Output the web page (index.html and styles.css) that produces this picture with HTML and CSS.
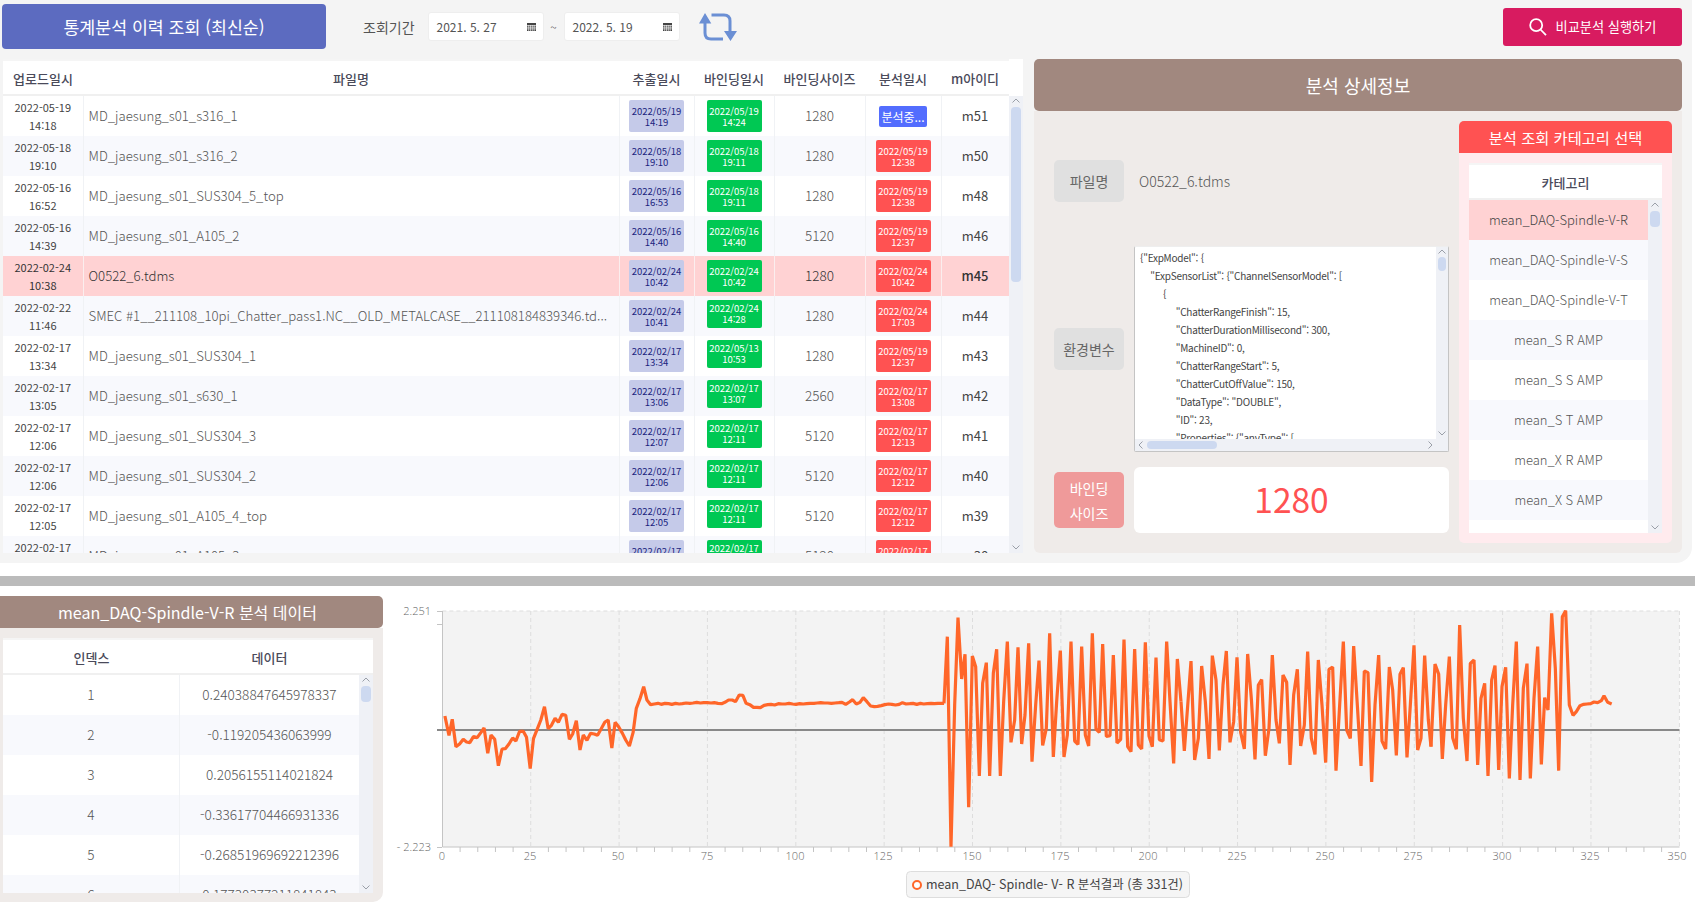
FILE: index.html
```html
<!DOCTYPE html>
<html lang="ko">
<head>
    <title>통계분석 이력 조회</title>
    <meta charset="UTF-8">
    <link rel="stylesheet" href="styles.css">
</head>
<body>
    <svg class="defs" width="0" height="0">
        <symbol id="cal" viewBox="0 0 9 8">
            <path d="M0 0h9v8H0z" fill="#444"/>
            <path d="M0 2.5h9M0 4.2h9M0 5.9h9M1.7 2v6M3.5 2v6M5.3 2v6M7.2 2v6" stroke="#fff" stroke-width=".6"/>
        </symbol>
        <symbol id="up" viewBox="0 0 8 5"><path d="M.5 4.5 4 1l3.5 3.5" fill="none" stroke="#9a9fa8"/></symbol>
        <symbol id="down" viewBox="0 0 8 5"><path d="M.5.5 4 4 7.500.5" fill="none" stroke="#9a9fa8"/></symbol>
        <symbol id="left" viewBox="0 0 5 8"><path d="M4.500.5 1 4l3.500 3.500" fill="none" stroke="#9a9fa8"/></symbol>
        <symbol id="right" viewBox="0 0 5 8"><path d="M.5.5 4 4 .5 7.500" fill="none" stroke="#9a9fa8"/></symbol>
    </svg>

    <div class="top">
        <div class="toolbar">
            <div class="btn-history">통계분석 이력 조회 (최신순)</div>
            <span class="period-label">조회기간</span>
            <div class="date-box">2021. 5. 27<svg class="cal"><use href="#cal"/></svg></div>
            <span class="tilde">~</span>
            <div class="date-box">2022. 5. 19<svg class="cal"><use href="#cal"/></svg></div>
            <svg class="refresh" viewBox="0 0 38 28">
                <path d="M6 10v10q0 6 6 6h12M12.500 2H25q6 0 6 6v11" fill="none" stroke="#6b8fd4" stroke-width="3"/>
                <path d="M6 0l6.300 10.500H0zM31.500 28L25 18h13z" fill="#6b8fd4"/>
            </svg>
            <div class="btn-compare">
                <svg class="search" viewBox="0 0 18 18">
                    <circle cx="7.200" cy="7.200" r="6" fill="none" stroke="#fff" stroke-width="1.800"/>
                    <path d="M11.500 11.500l5.500 5.700" stroke="#fff" stroke-width="1.800"/>
                </svg>
                비교분석 실행하기
            </div>
        </div>

        <div class="main">
            <div class="history">
                <table class="tbl head">
                    <colgroup><col class="c1"><col class="c2"><col class="c3"><col class="c4"><col class="c5"><col class="c6"><col class="c7"></colgroup>
                    <tr><th>업로드일시</th><th>파일명</th><th>추출일시</th><th>바인딩일시</th><th>바인딩사이즈</th><th>분석일시</th><th>m아이디</th></tr>
                </table>
                <div class="history-body">
                    <div class="history-rows">
                        <table class="tbl">
                            <colgroup><col class="c1"><col class="c2"><col class="c3"><col class="c4"><col class="c5"><col class="c6"><col class="c7"></colgroup>
                            <tr>
                                <td class="up">2022-05-19<br>14:18</td><td class="name">MD_jaesung_s01_s316_1</td>
                                <td><div class="badge ext">2022/05/19<br>14:19</div></td><td><div class="badge bind">2022/05/19<br>14:24</div></td>
                                <td class="size">1280</td><td><div class="badge busy">분석중...</div></td><td class="mid">m51</td>
                            </tr>
                            <tr class="alt">
                                <td class="up">2022-05-18<br>19:10</td><td class="name">MD_jaesung_s01_s316_2</td>
                                <td><div class="badge ext">2022/05/18<br>19:10</div></td><td><div class="badge bind">2022/05/18<br>19:11</div></td>
                                <td class="size">1280</td><td><div class="badge done">2022/05/19<br>12:38</div></td><td class="mid">m50</td>
                            </tr>
                            <tr>
                                <td class="up">2022-05-16<br>16:52</td><td class="name">MD_jaesung_s01_SUS304_5_top</td>
                                <td><div class="badge ext">2022/05/16<br>16:53</div></td><td><div class="badge bind">2022/05/18<br>19:11</div></td>
                                <td class="size">1280</td><td><div class="badge done">2022/05/19<br>12:38</div></td><td class="mid">m48</td>
                            </tr>
                            <tr class="alt">
                                <td class="up">2022-05-16<br>14:39</td><td class="name">MD_jaesung_s01_A105_2</td>
                                <td><div class="badge ext">2022/05/16<br>14:40</div></td><td><div class="badge bind">2022/05/16<br>14:40</div></td>
                                <td class="size">5120</td><td><div class="badge done">2022/05/19<br>12:37</div></td><td class="mid">m46</td>
                            </tr>
                            <tr class="sel">
                                <td class="up">2022-02-24<br>10:38</td><td class="name">O0522_6.tdms</td>
                                <td><div class="badge ext">2022/02/24<br>10:42</div></td><td><div class="badge bind">2022/02/24<br>10:42</div></td>
                                <td class="size">1280</td><td><div class="badge done">2022/02/24<br>10:42</div></td><td class="mid">m45</td>
                            </tr>
                            <tr class="alt">
                                <td class="up">2022-02-22<br>11:46</td><td class="name">SMEC #1__211108_10pi_Chatter_pass1.NC__OLD_METALCASE__211108184839346.td...</td>
                                <td><div class="badge ext">2022/02/24<br>10:41</div></td><td><div class="badge bind short">2022/02/24<br>14:28</div></td>
                                <td class="size">1280</td><td><div class="badge done">2022/02/24<br>17:03</div></td><td class="mid">m44</td>
                            </tr>
                            <tr>
                                <td class="up">2022-02-17<br>13:34</td><td class="name">MD_jaesung_s01_SUS304_1</td>
                                <td><div class="badge ext">2022/02/17<br>13:34</div></td><td><div class="badge bind short">2022/05/13<br>10:53</div></td>
                                <td class="size">1280</td><td><div class="badge done">2022/05/19<br>12:37</div></td><td class="mid">m43</td>
                            </tr>
                            <tr class="alt">
                                <td class="up">2022-02-17<br>13:05</td><td class="name">MD_jaesung_s01_s630_1</td>
                                <td><div class="badge ext">2022/02/17<br>13:06</div></td><td><div class="badge bind short">2022/02/17<br>13:07</div></td>
                                <td class="size">2560</td><td><div class="badge done">2022/02/17<br>13:08</div></td><td class="mid">m42</td>
                            </tr>
                            <tr>
                                <td class="up">2022-02-17<br>12:06</td><td class="name">MD_jaesung_s01_SUS304_3</td>
                                <td><div class="badge ext">2022/02/17<br>12:07</div></td><td><div class="badge bind short">2022/02/17<br>12:11</div></td>
                                <td class="size">5120</td><td><div class="badge done">2022/02/17<br>12:13</div></td><td class="mid">m41</td>
                            </tr>
                            <tr class="alt">
                                <td class="up">2022-02-17<br>12:06</td><td class="name">MD_jaesung_s01_SUS304_2</td>
                                <td><div class="badge ext">2022/02/17<br>12:06</div></td><td><div class="badge bind short">2022/02/17<br>12:11</div></td>
                                <td class="size">5120</td><td><div class="badge done">2022/02/17<br>12:12</div></td><td class="mid">m40</td>
                            </tr>
                            <tr>
                                <td class="up">2022-02-17<br>12:05</td><td class="name">MD_jaesung_s01_A105_4_top</td>
                                <td><div class="badge ext">2022/02/17<br>12:05</div></td><td><div class="badge bind short">2022/02/17<br>12:11</div></td>
                                <td class="size">5120</td><td><div class="badge done">2022/02/17<br>12:12</div></td><td class="mid">m39</td>
                            </tr>
                            <tr class="alt">
                                <td class="up">2022-02-17<br>12:04</td><td class="name">MD_jaesung_s01_A105_3</td>
                                <td><div class="badge ext">2022/02/17<br>12:04</div></td><td><div class="badge bind short">2022/02/17<br>12:11</div></td>
                                <td class="size">5120</td><td><div class="badge done">2022/02/17<br>12:12</div></td><td class="mid">m38</td>
                            </tr>
                        </table>
                    </div>
                    <div class="scroll bar-history">
                        <svg class="arrow"><use href="#up"/></svg>
                        <div class="thumb"></div>
                        <svg class="arrow end"><use href="#down"/></svg>
                    </div>
                </div>
            </div>

            <div class="detail">
                <div class="detail-title">분석 상세정보</div>
                <div class="detail-body">
                    <div class="detail-left">
                        <div class="row row-name">
                            <div class="tag">파일명</div>
                            <div class="file-value">O0522_6.tdms</div>
                        </div>
                        <div class="row row-env">
                            <div class="tag">환경변수</div>
                            <div class="json-box">
                                <div class="json-top">
<pre class="json">{"ExpModel": {
    "ExpSensorList": {"ChannelSensorModel": [
         {
              "ChatterRangeFinish": 15,
              "ChatterDurationMillisecond": 300,
              "MachineID": 0,
              "ChatterRangeStart": 5,
              "ChatterCutOffValue": 150,
              "DataType": "DOUBLE",
              "ID": 23,
              "Properties": {"anyType": [</pre>
                                    <div class="scroll bar-json">
                                        <svg class="arrow"><use href="#up"/></svg>
                                        <div class="thumb"></div>
                                        <svg class="arrow end"><use href="#down"/></svg>
                                    </div>
                                </div>
                                <div class="hbar">
                                    <svg class="harrow"><use href="#left"/></svg>
                                    <div class="hthumb"></div>
                                    <svg class="harrow end"><use href="#right"/></svg>
                                </div>
                            </div>
                        </div>
                        <div class="row row-size">
                            <div class="tag tag-pink">바인딩<br>사이즈</div>
                            <div class="size-value">1280</div>
                        </div>
                    </div>

                    <div class="detail-right">
                        <div class="cat-title">분석 조회 카테고리 선택</div>
                        <div class="cat-panel">
                            <div class="cat-card">
                                <div class="list-head">카테고리</div>
                                <div class="cat-body">
                                    <div class="cat-list">
                                        <div class="cat sel">mean_DAQ-Spindle-V-R</div>
                                        <div class="cat alt">mean_DAQ-Spindle-V-S</div>
                                        <div class="cat">mean_DAQ-Spindle-V-T</div>
                                        <div class="cat alt">mean_S R AMP</div>
                                        <div class="cat">mean_S S AMP</div>
                                        <div class="cat alt">mean_S T AMP</div>
                                        <div class="cat">mean_X R AMP</div>
                                        <div class="cat alt">mean_X S AMP</div>
                                    </div>
                                    <div class="scroll bar-cat">
                                        <svg class="arrow"><use href="#up"/></svg>
                                        <div class="thumb"></div>
                                        <svg class="arrow end"><use href="#down"/></svg>
                                    </div>
                                </div>
                            </div>
                        </div>
                    </div>
                </div>
            </div>
        </div>
    </div>

    <div class="divider"></div>

    <div class="bottom">
        <div class="data-panel">
            <div class="data-title">mean_DAQ-Spindle-V-R 분석 데이터</div>
            <div class="data-body">
                <div class="data-card">
                    <div class="data-head"><span>인덱스</span><span>데이터</span></div>
                    <div class="data-main">
                        <div class="data-rows">
                            <div class="drow"><span>1</span><span>0.24038847645978337</span></div>
                            <div class="drow alt"><span>2</span><span>-0.119205436063999</span></div>
                            <div class="drow"><span>3</span><span>0.2056155114021824</span></div>
                            <div class="drow alt"><span>4</span><span>-0.33617704466931336</span></div>
                            <div class="drow"><span>5</span><span>-0.26851969692212396</span></div>
                            <div class="drow alt"><span>6</span><span>0.17730377211841843</span></div>
                        </div>
                        <div class="scroll bar-data">
                            <svg class="arrow"><use href="#up"/></svg>
                            <div class="thumb"></div>
                            <svg class="arrow end"><use href="#down"/></svg>
                        </div>
                    </div>
                </div>
            </div>
        </div>

        <svg class="chart" viewBox="383 596 1312 306">
            <rect x="442.400" y="611" width="1237" height="236" fill="#f3f3f3"/>
            <path class="grid" d="M530.750 611V847M619.100 611V847M707.450 611V847M795.800 611V847M884.150 611V847M972.500 611V847M1060.850 611V847M1149.200 611V847M1237.550 611V847M1325.900 611V847M1414.250 611V847M1502.600 611V847M1590.950 611V847M1679.400 611V847M442.400 611H1679.400"/>
            <path class="axis" d="M442.500 611V847H1679.500M437 611.500h5M437 624.500h5M437 847.500h5"/>
            <path class="axis" d="M460.100 847v5m17.670-5v5m17.670-5v5m17.670-5v5M548.400 847v5m17.670-5v5m17.670-5v5m17.670-5v5M636.800 847v5m17.670-5v5m17.670-5v5m17.670-5v5M725.100 847v5m17.670-5v5m17.670-5v5m17.670-5v5M813.500 847v5m17.670-5v5m17.670-5v5m17.670-5v5M901.800 847v5m17.670-5v5m17.670-5v5m17.670-5v5M990.200 847v5m17.670-5v5m17.670-5v5m17.670-5v5M1078.500 847v5m17.670-5v5m17.670-5v5m17.670-5v5M1166.900 847v5m17.670-5v5m17.670-5v5m17.670-5v5M1255.200 847v5m17.670-5v5m17.670-5v5m17.670-5v5M1343.600 847v5m17.670-5v5m17.670-5v5m17.670-5v5M1431.900 847v5m17.670-5v5m17.670-5v5m17.670-5v5M1520.300 847v5m17.670-5v5m17.670-5v5m17.670-5v5M1608.600 847v5m17.670-5v5m17.670-5v5m17.670-5v5"/>
            <path class="zero" d="M437 730H1679.500"/>

            <text class="ylabel" x="431" y="615">2.251</text>
            <text class="ylabel" x="431" y="851">- 2.223</text>
            <g class="xlabels">
                <text x="442" y="860">0</text><text x="530" y="860">25</text><text x="618" y="860">50</text>
                <text x="707" y="860">75</text><text x="795" y="860">100</text><text x="883" y="860">125</text>
                <text x="972" y="860">150</text><text x="1060" y="860">175</text><text x="1148" y="860">200</text>
                <text x="1237" y="860">225</text><text x="1325" y="860">250</text><text x="1413" y="860">275</text>
                <text x="1502" y="860">300</text><text x="1590" y="860">325</text><text x="1677" y="860">350</text>
            </g>

            <!-- series read off the plot: first stretch, then the three spiky stretches -->
            <polyline class="line" transform="translate(380 590) scale(.40816 .33333)" points="159,378 169,436 177,388 186,470 195,462 204,448 212,456 220,458 229,440 238,443 247,428 255,414 264,490 272,435 281,448 290,527 299,477 307,476 316,462 325,444 333,453 342,424 351,424 359,442 368,536 376,446 385,418 394,390 403,350 412,416 420,406 429,385 437,397 446,373 455,376 464,448 472,432 481,392 490,480 498,435 507,451 516,430 525,432 533,436 542,416 551,396 559,390 568,474 576,397 585,411 594,430 602,450 611,468 620,428 628,355 637,326 646,290 654,330 663,344 672,342 681,340 689,343 698,340 707,341 715,343 724,340 733,342 741,341 750,339 759,340 767,339 776,337 785,339 793,338 802,338 811,339 819,338 828,340 837,341 845,337 854,330 863,330 871,335 880,315 889,316 897,340 906,344 915,352 924,352 932,353 941,346 950,344 958,343 967,345 976,341 985,342 993,342 1002,340 1011,342 1019,343 1028,341 1037,342 1045,341 1054,340 1063,340 1071,339 1080,338 1089,339 1097,339 1106,340 1115,339 1124,338 1132,337 1141,343 1150,336 1158,329 1167,342 1176,337 1184,323 1193,335 1202,348 1211,350 1219,349 1228,347 1237,344 1246,342 1254,343 1263,345 1272,343 1280,338 1289,342 1298,341 1306,340 1315,343 1324,340 1332,342 1341,341 1350,340 1358,341 1367,340 1376,340 1382,340"/>
            <polyline class="line" transform="translate(930 605) scale(.33333)" points="42,295 52,95 63,725 74,300 84,38 95,222 105,148 116,607 127,153 137,185 148,513 158,235 169,173 179,513 190,205 200,133 211,513 221,290 232,110 243,412 254,345 264,127 275,417 285,330 296,115 306,470 317,300 327,167 338,421 349,370 359,85 370,456 380,290 391,137 402,456 412,390 423,110 434,408 444,418 455,125 466,390 476,423 487,85 498,372 508,382 518,117 529,394 540,392 550,150 561,414 572,403 582,104 593,425 603,440 614,132 625,420 635,432 646,112 657,393 667,425 678,158 688,404 699,408 710,110 720,290 731,475 742,162 753,290"/>
            <polyline class="line" transform="translate(1180 605) scale(.33333)" points="3,290 13,438 33,168 44,465 55,400 65,183 76,290 87,462 97,152 108,225 118,436 129,240 139,138 150,412 161,350 171,157 182,382 193,432 203,147 214,280 225,463 235,240 245,224 256,452 267,370 277,150 288,345 298,415 309,210 320,232 330,480 341,270 352,193 362,423 373,360 383,140 394,400 405,448 415,165 426,300 437,473 447,193 458,186 468,497 479,300 490,110 500,375 511,400 521,123 532,300 543,483 553,198 564,203 575,531 585,300 596,150 606,408 617,432 628,186 638,255 649,451 660,208 670,188 681,457 691,300 702,121 713,435 723,400 734,152 745,345 753,425"/>
            <polyline class="line" transform="translate(1430 605) scale(.33333)" points="3,425 15,177 26,207 37,462 47,300 58,155 68,398 79,433 89,60 100,340 111,468 121,175 132,165 143,480 153,280 164,235 174,513 185,225 195,182 206,495 216,245 227,187 238,520 248,300 259,110 270,525 280,250 291,176 301,520 312,280 323,125 334,478 344,278 354,315 365,25 376,190 386,497 397,35 407,17 418,300 429,331 439,320 450,302 461,298 471,297 482,296 492,291 503,293 514,287 522,272 533,292 545,297"/>

            <rect class="legend-box" x="906.500" y="871.500" width="283" height="26" rx="4"/>
            <circle class="legend-dot" cx="917" cy="885" r="4"/>
            <text class="legend-text" x="926" y="889">mean_DAQ- Spindle- V- R 분석결과 (총 331건)</text>
        </svg>
    </div>
</body>
</html>
```

FILE: styles.css
```css
* { box-sizing: border-box; }

body {
    margin: 0;
    width: 1695px;
    height: 902px;
    overflow: hidden;
    background: white;
    color: #555;
    font-family: "Noto Sans CJK KR", "Noto Sans", sans-serif;
    font-weight: 300;
}

.defs { display: block; height: 0; }

.top {
    height: 563px;
    background: #f4f4f4;
    border-radius: 0 0 16px 0;
    margin-right: 3px;
}

.toolbar {
    height: 59px;
    display: flex;
    align-items: center;
    padding: 0 10px 6px 2px;
}

.btn-history {
    width: 324px;
    height: 45px;
    border-radius: 4px;
    background: #5c6bc0;
    color: white;
    font-size: 17.3px;
    font-weight: 400;
    line-height: 45px;
    text-align: center;
}

.period-label { margin-left: 37px; font-size: 14px; font-weight: 400; color: #555; }

.date-box {
    display: flex;
    align-items: center;
    justify-content: space-between;
    width: 116px;
    height: 29px;
    padding: 0 7px 0 8px;
    background: white;
    border: 1px solid #eee;
    border-radius: 3px;
    font-size: 12px;
    font-weight: 400;
}

.period-label + .date-box { margin-left: 13px; }
.tilde { width: 20px; font-size: 12px; text-align: center; }

.cal { width: 9px; height: 8px; }
.refresh { width: 38px; height: 28px; margin-left: 19px; }

.btn-compare {
    display: flex;
    align-items: center;
    justify-content: center;
    gap: 9px;
    width: 179px;
    height: 38px;
    margin-left: auto;
    border-radius: 3px;
    background: #d81b60;
    color: white;
    font-size: 13.2px;
    font-weight: 400;
}

.search { width: 18px; height: 18px; }

.main {
    display: flex;
    padding-left: 3px;
    gap: 11px;
    height: 494px;
}

/* history table */
.history {
    width: 1020px;
    height: 494px;
    display: flex;
    flex-direction: column;
    background: white;
}

.tbl { width: 1006px; border-collapse: collapse; table-layout: fixed; }
.c1 { width: 80px; }
.c2 { width: 536px; }
.c3 { width: 75px; }
.c4 { width: 80px; }
.c5 { width: 91px; }
.c6 { width: 76px; }
.c7 { width: 68px; }

.tbl.head { border-top: 2px solid #f5f5f5; flex: none; }

.tbl th {
    height: 35px;
    padding: 2px 0 0;
    font-size: 13px;
    font-weight: 500;
    color: #4a4a5a;
    border-bottom: 2px solid #f0f0f0;
}

.history-body { flex: 1; display: flex; min-height: 0; }
.history-rows { width: 1006px; overflow: hidden; }

.tbl td {
    height: 40px;
    padding: 0;
    text-align: center;
    vertical-align: middle;
    border-right: 1px solid #f0f2f5;
}

.tbl tr.alt td { background: #f8f9fd; }
.tbl tr.sel td { background: #ffd2d3; color: #333; border-right-color: #fbeeee; }

.up { font-size: 11px; line-height: 18px; color: #444; font-weight: 400; }
.tbl td.name {
    padding: 0 6px 2px 5px;
    text-align: left;
    font-size: 13.2px;
    color: #555;
    white-space: nowrap;
    overflow: hidden;
}
.tbl td.size { padding-bottom: 2px; font-size: 13.5px; color: #555; }
.tbl td.mid { padding-bottom: 2px; font-size: 13px; color: #444; font-weight: 400; }
.tbl tr.sel td.mid { font-weight: 500; }

.badge {
    width: 55px;
    height: 32px;
    margin: 0 auto;
    padding-top: 6px;
    border-radius: 2px;
    font-size: 9.5px;
    font-weight: 400;
    line-height: 11px;
}
.badge.ext { background: #c5cae9; color: #1a237e; }
.badge.bind { background: #00c853; color: white; }
.badge.bind.short { height: 28px; padding-top: 3px; margin-bottom: 4px; }
.badge.done { background: #ff5252; color: white; }
.badge.busy {
    width: 48px;
    height: 21px;
    padding: 0;
    background: #536dfe;
    color: white;
    font-size: 12px;
    line-height: 21px;
    white-space: nowrap;
}

/* fake scrollbars, all the same parts */
.scroll {
    display: flex;
    flex-direction: column;
    align-items: center;
    width: 14px;
    flex: none;
    background: #eff1f6;
    padding: 2px 0 3px;
}
.arrow { width: 8px; height: 5px; flex: none; }
.arrow.end { margin-top: auto; }
.thumb { width: 10px; margin-top: 4px; border-radius: 4px; background: #cdd9f0; }
.bar-history .thumb { height: 175px; }
.bar-cat .thumb,
.bar-data .thumb { height: 16px; }

/* detail side */
.detail { width: 648px; height: 494px; }

.detail-title {
    height: 52px;
    border-radius: 5px;
    background: #a1887f;
    color: white;
    font-size: 18px;
    font-weight: 400;
    line-height: 52px;
    text-align: center;
}

.detail-body {
    display: flex;
    gap: 10px;
    height: 442px;
    padding: 10px 10px 10px 20px;
    background: #efebe9;
    border-radius: 0 0 6px 6px;
}

.detail-left { width: 395px; padding-top: 39px; }

.row { display: flex; align-items: center; gap: 10px; }
.row-name { height: 42px; margin-bottom: 44px; }
.row-env { height: 206px; margin-bottom: 15px; }
.row-size { height: 66px; }

.tag {
    width: 70px;
    height: 42px;
    flex: none;
    border-radius: 5px;
    background: #e0e0e0;
    font-size: 14px;
    font-weight: 400;
    line-height: 42px;
    text-align: center;
    color: #666;
}
.tag-pink { height: 56px; background: #ef9a9a; color: white; line-height: 25px; padding-top: 4px; }

.file-value { margin-left: 5px; font-size: 14px; color: #555; }

.json-box {
    width: 315px;
    height: 206px;
    display: flex;
    flex-direction: column;
    background: white;
    border: 1px solid #c4c4c4;
    border-top-color: #eee;
    border-radius: 2px;
}
.json-top { flex: 1; display: flex; min-height: 0; }
.json {
    flex: 1;
    margin: 0;
    padding: 2px 0 0 5px;
    overflow: hidden;
    font-family: inherit;
    font-size: 10px;
    font-weight: 400;
    letter-spacing: -.25px;
    line-height: 18px;
    color: #444;
}
.bar-json { width: 12px; }
.bar-json .thumb { width: 8px; height: 14px; margin-top: 3px; }

.hbar {
    display: flex;
    align-items: center;
    height: 12px;
    flex: none;
    padding: 0 15px 0 3px;
    background: #eff1f6;
}
.harrow { width: 5px; height: 8px; flex: none; }
.harrow.end { margin-left: auto; }
.hthumb { width: 70px; height: 8px; margin-left: 4px; border-radius: 4px; background: #cdd9f0; }

.size-value {
    width: 315px;
    height: 66px;
    border-radius: 6px;
    background: white;
    color: #ff5252;
    font-size: 33.500px;
    font-weight: 400;
    line-height: 64px;
    text-align: center;
}

.detail-right { width: 213px; }

.cat-title {
    height: 32px;
    border-radius: 5px 5px 0 0;
    background: #ff5252;
    color: white;
    font-size: 15.300px;
    font-weight: 400;
    line-height: 32px;
    text-align: center;
}

.cat-panel {
    height: 390px;
    padding: 10px;
    background: #ffebee;
    border-radius: 0 0 5px 5px;
}

.cat-card { height: 370px; display: flex; flex-direction: column; background: white; }

.list-head {
    height: 37px;
    flex: none;
    border-top: 2px solid #f5f5f5;
    border-bottom: 2px solid #f0f0f0;
    font-size: 13px;
    font-weight: 500;
    line-height: 35px;
    text-align: center;
    color: #4a4a5a;
}

.cat-body { flex: 1; display: flex; min-height: 0; }
.cat-list { flex: 1; }
.cat { height: 40px; font-size: 13px; line-height: 40px; text-align: center; color: #555; }
.cat.alt { background: #f8f9fd; }
.cat.sel { background: #ffd2d3; color: #444; }

.divider { height: 10px; margin-top: 13px; background: #bbb; }

/* bottom */
.bottom { display: flex; height: 316px; padding-top: 10px; }

.data-panel { width: 383px; flex: none; }

.data-title {
    height: 32px;
    padding-right: 8px;
    border-radius: 0 5px 5px 0;
    background: #a1887f;
    color: white;
    font-size: 16px;
    font-weight: 400;
    line-height: 32px;
    text-align: center;
}

.data-body {
    height: 274px;
    padding: 10px 10px 9px 3px;
    background: #efebe9;
    border-radius: 0 0 10px 0;
}

.data-card { height: 255px; display: flex; flex-direction: column; background: white; overflow: hidden; }

.data-head {
    display: grid;
    grid-template-columns: 177px 179px;
    height: 37px;
    flex: none;
    border-top: 2px solid #f5f5f5;
    border-bottom: 2px solid #f0f0f0;
    font-size: 13px;
    font-weight: 500;
    line-height: 35px;
    text-align: center;
    color: #4a4a5a;
}

.data-main { flex: 1; display: flex; min-height: 0; }
.data-rows { flex: 1; overflow: hidden; }

.drow {
    display: grid;
    grid-template-columns: 177px 1fr;
    height: 40px;
    font-size: 13.600px;
    line-height: 39px;
    text-align: center;
    color: #555;
}
.drow span:first-child { border-right: 1px solid #f0f2f5; }
.drow.alt { background: #f8f9fd; }

.chart { width: 1312px; height: 306px; flex: none; }
.grid { stroke: #ddd; stroke-dasharray: 4 3; fill: none; }
.axis { stroke: #c4c4c4; fill: none; }
.zero { stroke: #888; stroke-width: 2; fill: none; }
.ylabel { font-family: "Open Sans", sans-serif; font-size: 11px; fill: #666; text-anchor: end; }
.xlabels text { font-family: "Open Sans", sans-serif; font-size: 11px; fill: #666; text-anchor: middle; }
.line {
    fill: none;
    stroke: #ff6629;
    stroke-width: 3.200px;
    vector-effect: non-scaling-stroke;
    stroke-linejoin: bevel;
}
.legend-box { fill: #f5f5f5; stroke: #ddd; }
.legend-dot { fill: white; stroke: #ff6629; stroke-width: 2; }
.legend-text { font-size: 12.500px; font-weight: 400; fill: #444; }
```
